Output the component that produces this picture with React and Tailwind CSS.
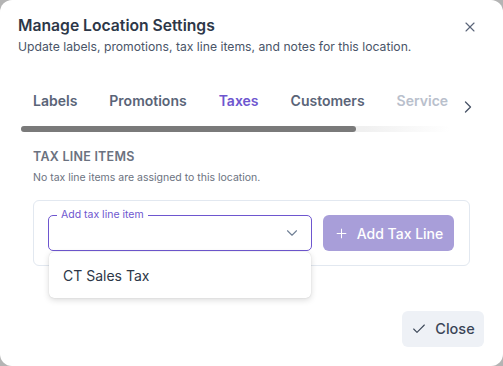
import { Check, ChevronDown, ChevronRight, Plus, X } from "lucide-react";

const tabs = [
  { label: "Labels" },
  { label: "Promotions" },
  { label: "Taxes", active: true },
  { label: "Customers" },
  { label: "Service", faded: true },
];

export default function App() {
  return (
    <div
      className="h-[366px] w-[503px] bg-[#b4b4b4]"
      style={{ fontFamily: "Inter, 'Noto Sans', sans-serif" }}
    >
      <div className="relative flex h-full w-full flex-col rounded-xl bg-white">
        {/* header */}
        <div className="flex items-start justify-between pl-[18px] pr-[25px] pt-[14px]">
          <div>
            <h2 className="text-[15.7px] font-semibold leading-[24px] text-[#2d3748]">
              Manage Location Settings
            </h2>
            <p className="text-[12.2px] leading-[18px] text-[#4a5568]">
              Update labels, promotions, tax line items, and notes for this location.
            </p>
          </div>
          <button className="mt-[5px] text-[#5a6478]">
            <X size={16} strokeWidth={1.6} />
          </button>
        </div>

        {/* tabs */}
        <div className="mt-[21px] flex items-start pl-[17px]">
          <div className="relative w-[433px]">
            <div className="flex overflow-hidden">
              {tabs.map((t) => (
                <div
                  key={t.label}
                  className={
                    "shrink-0 px-4 py-[14px] text-[14px] font-semibold leading-[20px] " +
                    (t.active
                      ? "text-[#6e56cf]"
                      : t.faded
                      ? "text-[#b9c0cc]"
                      : "text-[#5a6478]")
                  }
                >
                  {t.label}
                </div>
              ))}
            </div>
            <div className="ml-[4px] mt-[1px] h-[6px] w-[429px] rounded-full bg-gradient-to-r from-[#f0f0f0] from-80% to-white">
              <div className="h-full w-[335px] rounded-full bg-[#7a7a7a]" />
            </div>
          </div>
          <button className="ml-[8px] mt-[20px] text-[#4a5568]">
            <ChevronRight size={20} strokeWidth={1.6} />
          </button>
        </div>

        {/* section */}
        <div className="px-[33px] pt-[16px]">
          <h3 className="text-[12.5px] font-semibold uppercase leading-[18px] tracking-[0.02em] text-[#6b7280]">
            Tax line items
          </h3>
          <p className="mt-[4px] text-[10.5px] leading-[16px] text-[#6b7280]">
            No tax line items are assigned to this location.
          </p>

          <div className="mt-[14px] flex items-center gap-[11px] rounded-md border border-[#e2e8f0] p-[14px]">
            <div className="relative h-[36px] w-[264px] rounded-[5px] border border-[#6e56cf]">
              <span className="absolute -top-[8px] left-[8px] bg-white px-[4px] text-[10.5px] leading-[14px] text-[#6e56cf]">
                Add tax line item
              </span>
              <ChevronDown
                size={18}
                strokeWidth={1.5}
                className="absolute right-[10px] top-[8px] text-[#718096]"
              />
              <div className="absolute left-0 top-[36px] w-[262px] rounded-[5px] bg-white py-[11px] pl-[14px] shadow-[0_2px_6px_rgba(0,0,0,0.15),0_0_1px_rgba(0,0,0,0.2)]">
                <span className="text-[14px] leading-[20px] text-[#2d3748]">CT Sales Tax</span>
              </div>
            </div>
            <button className="flex h-[36px] w-[131px] items-center justify-center gap-[8px] rounded-md bg-[#a89ed9] text-[14px] font-medium text-white">
              <Plus size={15} strokeWidth={1.6} />
              Add Tax Line
            </button>
          </div>
        </div>

        {/* footer */}
        <div className="mt-auto flex justify-end pb-[19px] pr-[19px]">
          <button className="flex h-[36px] w-[82px] items-center justify-center gap-[8px] rounded-md bg-[#eef1f6] text-[14.5px] font-medium text-[#3a4556]">
            <Check size={16} strokeWidth={1.6} />
            Close
          </button>
        </div>
      </div>
    </div>
  );
}
